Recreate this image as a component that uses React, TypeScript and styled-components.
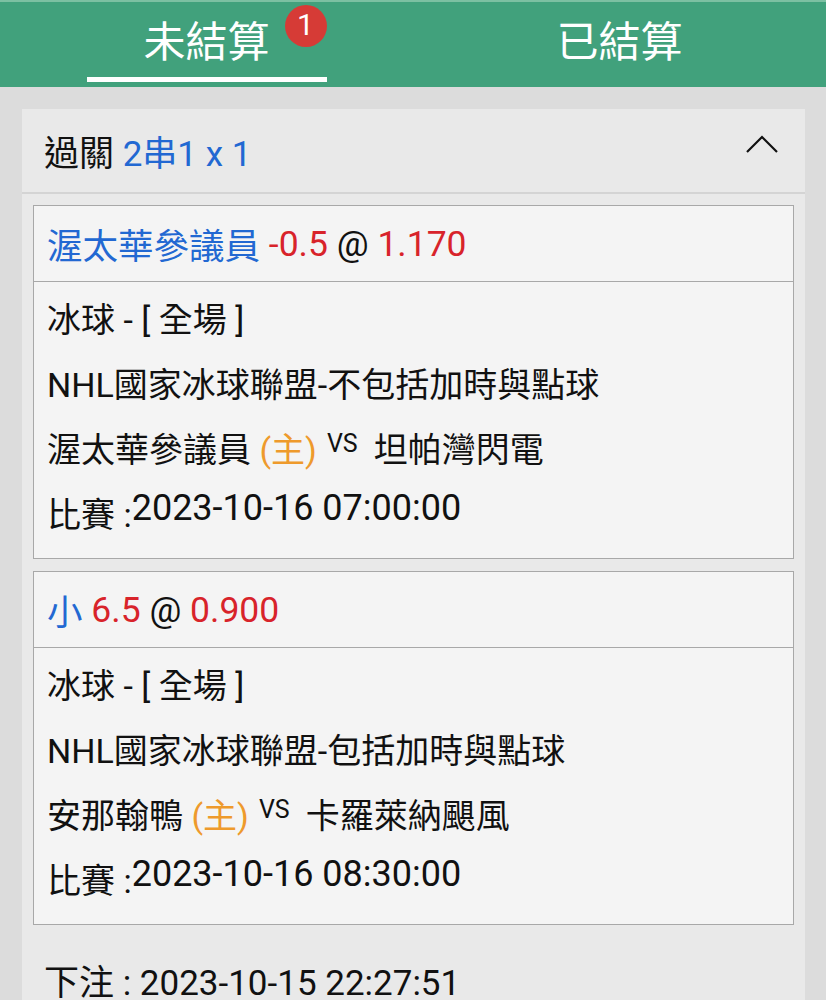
import React from 'react';
import styled, { createGlobalStyle } from 'styled-components';

const GlobalStyle = createGlobalStyle`
  html, body {
    margin: 0;
    padding: 0;
    background: #dcdcdc;
  }
  body {
    font-family: "Roboto", "Noto Sans CJK TC", sans-serif;
    color: #111;
  }
`;

const Page = styled.div`
  width: 826px;
  min-height: 1000px;
  background: #dcdcdc;
`;

const TabBar = styled.div`
  display: flex;
  height: 85px;
  background: #41a17c;
  border-top: 2px solid #7cc0a2;
`;

const Tab = styled.div`
  flex: 1;
  display: flex;
  justify-content: center;
`;

const TabInner = styled.div<{ active?: boolean }>`
  width: 240px;
  height: 80px;
  display: flex;
  justify-content: center;
  padding-top: 12px;
  box-sizing: border-box;
  border-bottom: 5px solid ${p => (p.active ? '#ffffff' : 'transparent')};
`;

const TabLabel = styled.span`
  position: relative;
  color: #fff;
  font-size: 42px;
  line-height: 50px;
  font-family: "Noto Sans CJK TC", sans-serif;
`;

const Badge = styled.span`
  position: absolute;
  top: -9px;
  right: -57px;
  width: 42px;
  height: 42px;
  border-radius: 50%;
  background: #d63b36;
  color: #fff;
  font-size: 30px;
  line-height: 40px;
  text-align: center;
  font-family: "Roboto", sans-serif;
`;

const Content = styled.div`
  padding: 22px 21px 0 22px;
`;

const Card = styled.div`
  background: #e9e9e9;
  padding-bottom: 20px;
`;

const CardHeader = styled.div`
  display: flex;
  align-items: center;
  justify-content: space-between;
  height: 83px;
  padding: 0 27px 0 22px;
  border-bottom: 2px solid #d4d4d4;
`;

const HeaderTitle = styled.div`
  font-size: 35px;
`;

const Blue = styled.span`
  color: #2268d2;
`;

const Red = styled.span`
  color: #d8232a;
`;

const Orange = styled.span`
  color: #ee9a2c;
`;

const Chevron = styled.svg`
  width: 32px;
  height: 18px;
  margin-bottom: 14px;
`;

const Legs = styled.div`
  display: flex;
  flex-direction: column;
  gap: 12px;
  padding: 11px 11px 0 11px;
`;

const Leg = styled.div`
  background: #f4f4f4;
  border: 1.5px solid #a8a8a8;
`;

const LegTitle = styled.div`
  height: 75px;
  display: flex;
  align-items: center;
  padding: 0 13px;
  font-size: 35.5px;
  border-bottom: 1.5px solid #a8a8a8;
`;

const LegBody = styled.div`
  padding: 6px 13px 10px;
  font-size: 34px;
`;

const Line = styled.div`
  height: 65px;
  line-height: 64px;
  white-space: nowrap;
`;

const Vs = styled.span`
  position: relative;
  top: -10px;
  font-size: 25px;
  margin: 0 16px 0 10px;
`;

const Raised = styled.span`
  position: relative;
  top: -7px;
  font-size: 36px;
`;

const BetTime = styled.div`
  font-size: 35px;
  padding: 34px 22px 0;
  line-height: 50px;
`;

interface LegData {
  pick: string;
  line: string;
  odds: string;
  league: string;
  home: string;
  away: string;
  time: string;
}

const legs: LegData[] = [
  {
    pick: '渥太華參議員',
    line: '-0.5',
    odds: '1.170',
    league: 'NHL國家冰球聯盟-不包括加時與點球',
    home: '渥太華參議員',
    away: '坦帕灣閃電',
    time: '2023-10-16 07:00:00',
  },
  {
    pick: '小',
    line: '6.5',
    odds: '0.900',
    league: 'NHL國家冰球聯盟-包括加時與點球',
    home: '安那翰鴨',
    away: '卡羅萊納颶風',
    time: '2023-10-16 08:30:00',
  },
];

const App: React.FC = () => {
  return (
    <Page>
      <GlobalStyle />
      <TabBar>
        <Tab>
          <TabInner active>
            <TabLabel>
              未結算
              <Badge>1</Badge>
            </TabLabel>
          </TabInner>
        </Tab>
        <Tab>
          <TabInner>
            <TabLabel>已結算</TabLabel>
          </TabInner>
        </Tab>
      </TabBar>
      <Content>
        <Card>
          <CardHeader>
            <HeaderTitle>
              過關 <Blue>2串1 x 1</Blue>
            </HeaderTitle>
            <Chevron viewBox="0 0 32 18">
              <polyline points="1,17 16,2 31,17" fill="none" stroke="#111" strokeWidth="2.2" />
            </Chevron>
          </CardHeader>
          <Legs>
            {legs.map((leg, i) => (
              <Leg key={i}>
                <LegTitle>
                  <Blue>{leg.pick}</Blue>&nbsp;<Red>{leg.line}</Red>&nbsp;@&nbsp;<Red>{leg.odds}</Red>
                </LegTitle>
                <LegBody>
                  <Line>冰球 - [ 全場 ]</Line>
                  <Line>{leg.league}</Line>
                  <Line>
                    {leg.home} <Orange>(主)</Orange>
                    <Vs>VS</Vs>
                    {leg.away}
                  </Line>
                  <Line>
                    比賽 :<Raised>{leg.time}</Raised>
                  </Line>
                </LegBody>
              </Leg>
            ))}
          </Legs>
          <BetTime>下注 : 2023-10-15 22:27:51</BetTime>
        </Card>
      </Content>
    </Page>
  );
};

export default App;
